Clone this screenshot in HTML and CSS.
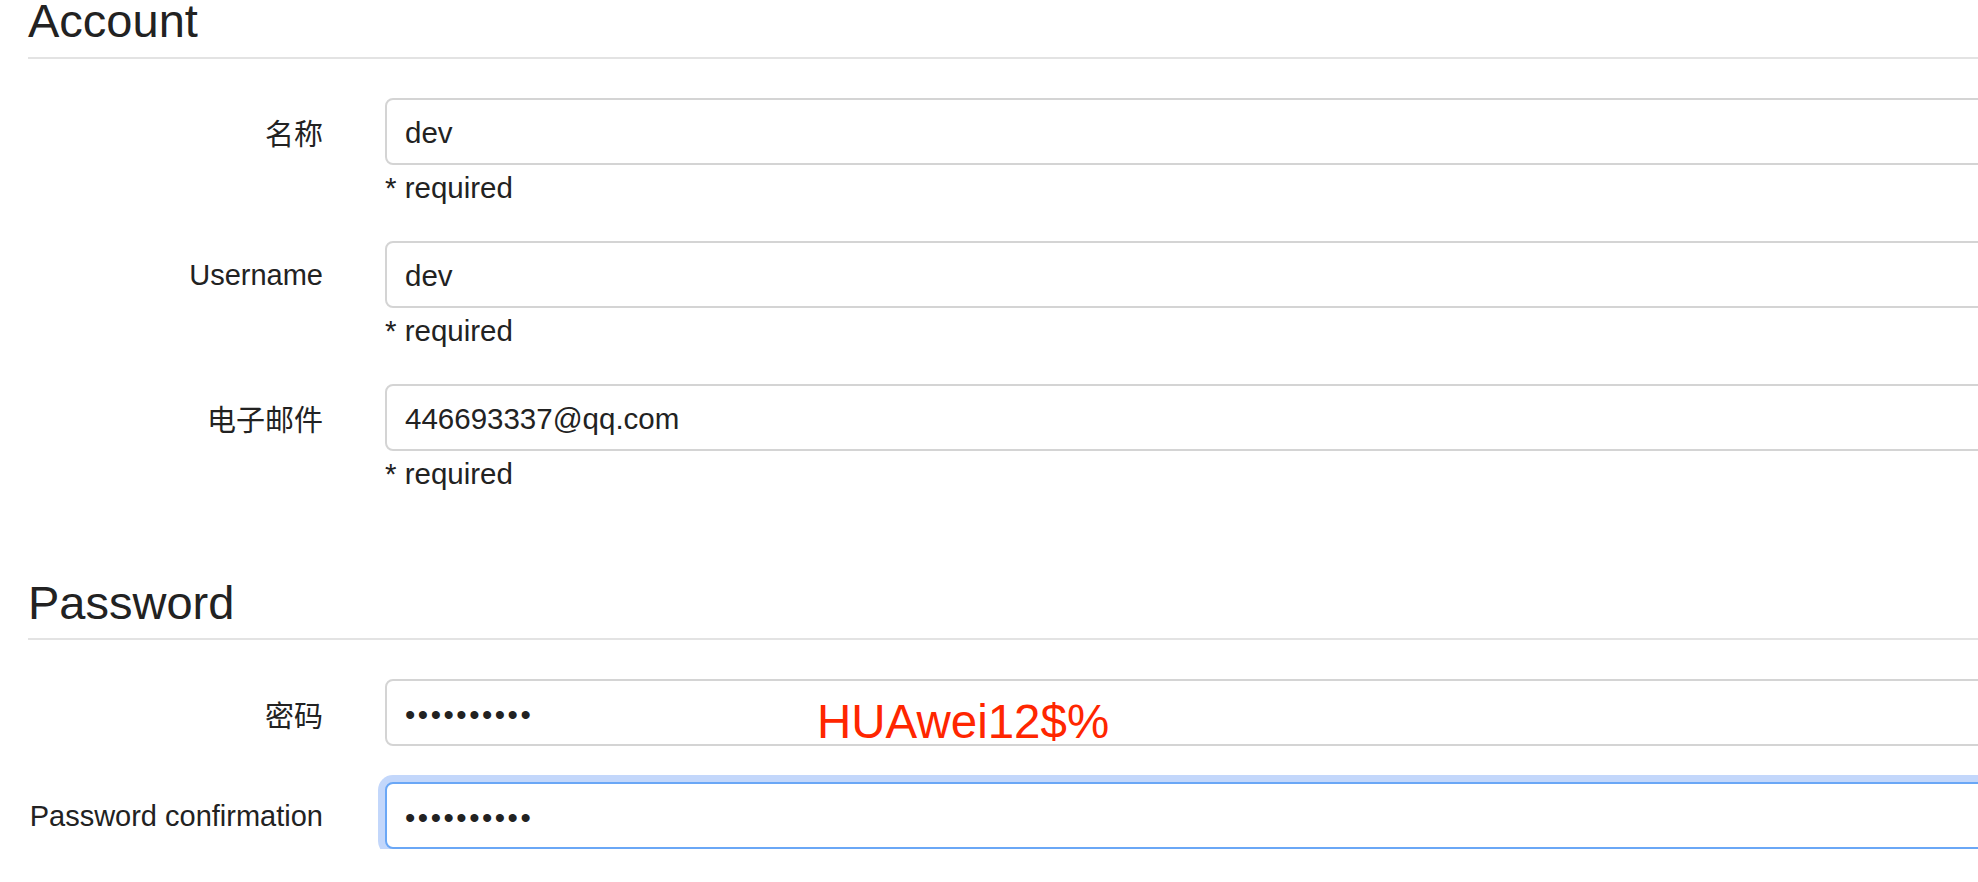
FILE: index.html
```html
<!DOCTYPE html>
<html>
  <head>
    <meta charset="utf-8">
    <title>Account</title>
    <link rel="stylesheet" href="styles.css">
  </head>
  <body>
    <div class="page">
      <!-- datos de la cuenta -->
      <section class="fieldset">
        <h3 class="legend">Account</h3>
        <div class="form-row">
          <label class="field-label" for="user_name">名称</label>
          <div class="control">
            <input class="form-input" id="user_name" type="text" value="dev">
            <p class="help">* required</p>
          </div>
        </div>
        <div class="form-row">
          <label class="field-label" for="user_username">Username</label>
          <div class="control">
            <input class="form-input" id="user_username" type="text" value="dev">
            <p class="help">* required</p>
          </div>
        </div>
        <div class="form-row">
          <label class="field-label" for="user_email">电子邮件</label>
          <div class="control">
            <input class="form-input" id="user_email" type="text" value="446693337@qq.com">
            <p class="help">* required</p>
          </div>
        </div>
      </section>

      <!-- cambio de contraseña -->
      <section class="fieldset fieldset-password">
        <h3 class="legend">Password</h3>
        <div class="form-row">
          <label class="field-label" for="user_password">密码</label>
          <div class="control">
            <input class="form-input form-input-password" id="user_password" type="password" value="HUAwei12$%">
            <span class="note">HUAwei12$%</span>
          </div>
        </div>
        <div class="form-row">
          <label class="field-label" for="user_password_confirmation">Password confirmation</label>
          <div class="control">
            <input class="form-input form-input-password is-focused" id="user_password_confirmation" type="password" value="HUAwei12$%">
          </div>
        </div>
      </section>
    </div>
  </body>
</html>
```

FILE: styles.css
```css
body {
  margin: 0;
  background-color: #ffffff;
  color: #222222;
  font-family: "Liberation Sans", "Noto Sans CJK SC", sans-serif;
  overflow: hidden;
}

.page {
  width: 2100px;
  padding-left: 28px;
}

.legend {
  margin: -5px 0 39px 0;
  padding-bottom: 10px;
  border-bottom: 2px solid #e3e3e3;
  font-size: 47px;
  font-weight: normal;
  line-height: 1.1;
  color: #222222;
}

.fieldset-password {
  margin-top: 91px;
}

.form-row {
  display: grid;
  grid-template-columns: 295px 1fr;
  column-gap: 62px;
  align-items: start;
}

.form-row + .form-row {
  margin-top: 36px;
}

.field-label {
  height: 67px;
  padding-top: 2px;
  box-sizing: border-box;
  display: flex;
  align-items: center;
  justify-content: flex-end;
  font-size: 29px;
  white-space: nowrap;
}

.control {
  position: relative;
}

.form-input {
  display: block;
  box-sizing: border-box;
  width: 100%;
  height: 67px;
  padding: 4px 18px 0 18px;
  border: 2px solid #d4d4d4;
  border-radius: 8px;
  background-color: #ffffff;
  color: #222222;
  font-family: "Liberation Sans", sans-serif;
  font-size: 29.5px;
  outline: none;
}

.form-input-password {
  letter-spacing: 2.5px;
}

.form-input.is-focused {
  border-color: #6aa7f6;
  box-shadow: 0 0 0 7px #c3d7fb;
}

.help {
  margin: 3px 0 -3px 0;
  font-size: 29.5px;
  line-height: 40px;
}

/* nota en rojo encima del campo */
.note {
  position: absolute;
  left: 432px;
  top: 19px;
  font-size: 47.5px;
  line-height: 1;
  color: #ff2600;
  white-space: nowrap;
}
```
